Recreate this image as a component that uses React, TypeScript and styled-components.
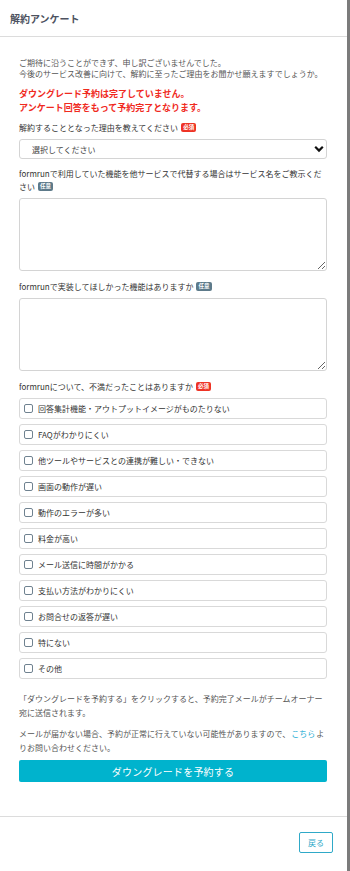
import React from "react";
import styled, { createGlobalStyle } from "styled-components";

const GlobalStyle = createGlobalStyle`
	html, body {
		margin: 0;
		padding: 0;
		background: #7b7b7b;
	}
	body {
		font-family: "Noto Sans CJK JP", "Noto Sans", sans-serif;
	}
`;

const Modal = styled.div`
	width: 347px;
	height: 871px;
	background: #fff;
	display: flex;
	flex-direction: column;
	box-sizing: border-box;
`;

const Header = styled.div`
	height: 36px;
	flex: none;
	display: flex;
	align-items: center;
	padding-left: 10px;
	border-bottom: 1px solid #dcdcdc;
	font-size: 10px;
	font-weight: 700;
	color: #4d5260;
`;

const Body = styled.div`
	padding: 20px 20px 34px 19px;
	display: flex;
	flex-direction: column;
	border-bottom: 1px solid #dcdcdc;
`;

const Lead = styled.p`
	margin: 0;
	font-size: 8px;
	line-height: 11px;
	color: #555;
`;

const Alert = styled.p`
	margin: 8px 0 0;
	font-size: 9px;
	line-height: 14px;
	font-weight: 700;
	color: #f02a1e;
`;

const Label = styled.div<{ $gap: number }>`
	margin-top: ${(p) => p.$gap}px;
	font-size: 8px;
	line-height: 13px;
	color: #333;
`;

const Badge = styled.span<{ $required?: boolean }>`
	display: inline-block;
	position: relative;
	top: 2px;
	margin-left: 3px;
	padding: 0 2px;
	height: 9px;
	line-height: 9px;
	font-size: 5.5px;
	font-weight: 700;
	vertical-align: top;
	border-radius: 2px;
	color: #fff;
	background: ${(p) => (p.$required ? "#ee3325" : "#5d7a8a")};
`;

const SelectWrap = styled.div`
	position: relative;
	margin-top: 5px;
`;

const Select = styled.select`
	display: block;
	appearance: none;
	width: 100%;
	height: 20px;
	box-sizing: border-box;
	border: 1px solid #d4d4d4;
	border-radius: 3px;
	background: #fff;
	padding: 0 0 0 12px;
	font-family: inherit;
	font-size: 8px;
	color: #444;
	outline: none;
`;

const Chevron = styled.svg`
	position: absolute;
	right: 3px;
	top: 6px;
	pointer-events: none;
`;

const TextArea = styled.textarea`
	display: block;
	margin-top: 5px;
	width: 100%;
	height: 73px;
	box-sizing: border-box;
	border: 1px solid #d4d4d4;
	border-radius: 3px;
	resize: vertical;
	font-family: inherit;
	font-size: 8px;
	outline: none;
`;

const OptionList = styled.div`
	margin-top: 5px;
	display: flex;
	flex-direction: column;
	gap: 5px;
`;

const Option = styled.label`
	height: 21px;
	box-sizing: border-box;
	display: flex;
	align-items: center;
	gap: 5px;
	padding-left: 4px;
	border: 1px solid #d9d9d9;
	border-radius: 3px;
	font-size: 8px;
	color: #333;
`;

const Box = styled.span`
	width: 9px;
	height: 9px;
	box-sizing: border-box;
	border: 1px solid #6f8290;
	border-radius: 2px;
	flex: none;
`;

const Note = styled.p<{ $gap: number }>`
	margin: ${(p) => p.$gap}px 0 0;
	font-size: 8px;
	line-height: 13.5px;
	color: #555;
`;

const Link = styled.a`
	color: #2aaed4;
	text-decoration: none;
	margin: 0 1px;
`;

const Submit = styled.button`
	margin-top: 6px;
	height: 22px;
	width: 100%;
	border: none;
	border-radius: 2px;
	background: #00b3cd;
	color: #fff;
	font-family: inherit;
	font-size: 10px;
	letter-spacing: 0.2px;
`;

const Footer = styled.div`
	display: flex;
	justify-content: flex-end;
	padding: 15px 14px 0 0;
`;

const BackButton = styled.button`
	width: 34px;
	height: 21px;
	box-sizing: border-box;
	border: 1px solid #2fa9c8;
	border-radius: 2px;
	background: #fff;
	color: #2fa9c8;
	font-family: inherit;
	font-size: 8px;
	padding: 0;
`;

const options = [
	"回答集計機能・アウトプットイメージがものたりない",
	"FAQがわかりにくい",
	"他ツールやサービスとの連携が難しい・できない",
	"画面の動作が遅い",
	"動作のエラーが多い",
	"料金が高い",
	"メール送信に時間がかかる",
	"支払い方法がわかりにくい",
	"お問合せの返答が遅い",
	"特にない",
	"その他",
];

const App = (): JSX.Element => {
	return (
		<>
			<GlobalStyle />
			<Modal>
				<Header>解約アンケート</Header>
				<Body>
					<Lead>
						ご期待に沿うことができず、申し訳ございませんでした。
						<br />
						今後のサービス改善に向けて、解約に至ったご理由をお聞かせ願えますでしょうか。
					</Lead>
					<Alert>
						ダウングレード予約は完了していません。
						<br />
						アンケート回答をもって予約完了となります。
					</Alert>

					<Label $gap={6}>
						解約することとなった理由を教えてください<Badge $required>必須</Badge>
					</Label>
					<SelectWrap>
						<Select defaultValue="">
							<option value="">選択してください</option>
						</Select>
						<Chevron width="10" height="8" viewBox="0 0 10 8">
							<path d="M1.2 1.8 L5 5.6 L8.8 1.8" fill="none" stroke="#111" strokeWidth="2.2" />
						</Chevron>
					</SelectWrap>

					<Label $gap={8}>
						formrunで利用していた機能を他サービスで代替する場合はサービス名をご教示ください
						<Badge>任意</Badge>
					</Label>
					<TextArea />

					<Label $gap={9}>
						formrunで実装してほしかった機能はありますか<Badge>任意</Badge>
					</Label>
					<TextArea />

					<Label $gap={9}>
						formrunについて、不満だったことはありますか<Badge $required>必須</Badge>
					</Label>
					<OptionList>
						{options.map((o) => (
							<Option key={o}>
								<Box />
								{o}
							</Option>
						))}
					</OptionList>

					<Note $gap={13}>
						「ダウングレードを予約する」をクリックすると、予約完了メールがチームオーナー宛に送信されます。
					</Note>
					<Note $gap={8}>
						メールが届かない場合、予約が正常に行えていない可能性がありますので、<Link href="#">こちら</Link>よりお問い合わせください。
					</Note>
					<Submit>ダウングレードを予約する</Submit>
				</Body>
				<Footer>
					<BackButton>戻る</BackButton>
				</Footer>
			</Modal>
		</>
	);
};

export default App;
